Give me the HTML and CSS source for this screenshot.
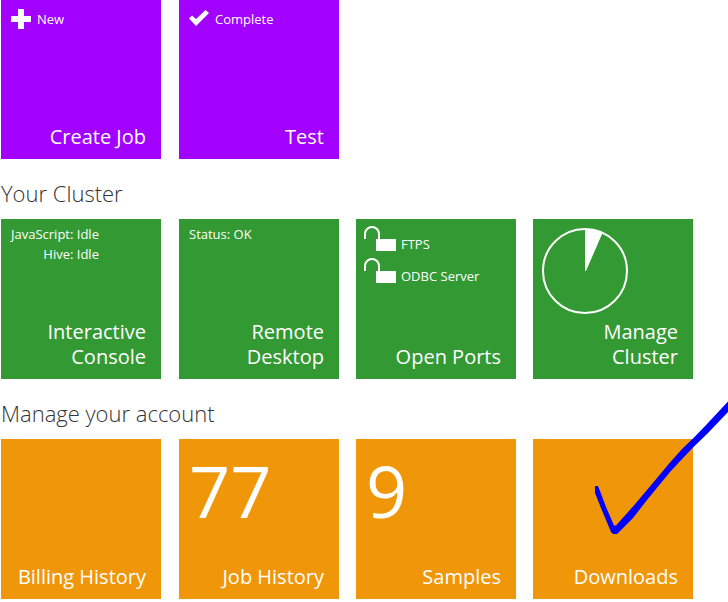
FILE: index.html
```html
<!DOCTYPE html>
<html lang="en">
<head>
<meta charset="utf-8">
<meta name="viewport" content="width=device-width, initial-scale=1">
<title>Cluster dashboard</title>
<link rel="stylesheet" href="styles.css">
</head>
<body>
<main class="page">
  <section class="tiles jobs">
    <a class="tile" href="#create">
      <span class="status">
        <svg class="icon" width="20" height="20" viewBox="0 0 20 20" aria-hidden="true"><path d="M7 0h6v7h7v6h-7v7H7v-7H0V7h7z"/></svg>
        New
      </span>
      <span class="label">Create Job</span>
    </a>
    <a class="tile" href="#test">
      <span class="status">
        <svg class="icon" width="20" height="20" viewBox="0 0 20 20" aria-hidden="true"><path d="M0 9.500 3 6.500l4 3.500L16.500 1 20 4 7 17z"/></svg>
        Complete
      </span>
      <span class="label">Test</span>
    </a>
  </section>

  <h2 class="heading">Your Cluster</h2>
  <section class="tiles cluster">
    <a class="tile" href="#console">
      <span class="states">
        <span>JavaScript: Idle</span>
        <span>Hive: Idle</span>
      </span>
      <span class="label">Interactive Console</span>
    </a>
    <a class="tile" href="#desktop">
      <span class="states"><span>Status: OK</span></span>
      <span class="label">Remote Desktop</span>
    </a>
    <a class="tile" href="#ports">
      <span class="ports">
        <span class="port">
          <svg class="icon" width="32" height="25" viewBox="0 0 32 25" aria-hidden="true"><path d="M0 13V8a8 8 0 0 1 16 0v5h-2V8A6 6 0 0 0 2 8v5zM12 13h20v12H12z"/></svg>
          <span class="port-name">FTPS</span>
        </span>
        <span class="port">
          <svg class="icon" width="32" height="25" viewBox="0 0 32 25" aria-hidden="true"><path d="M0 13V8a8 8 0 0 1 16 0v5h-2V8A6 6 0 0 0 2 8v5zM12 13h20v12H12z"/></svg>
          <span class="port-name">ODBC Server</span>
        </span>
      </span>
      <span class="label">Open Ports</span>
    </a>
    <a class="tile" href="#manage">
      <svg class="gauge" width="86" height="86" viewBox="0 0 86 86" aria-hidden="true">
        <circle cx="43" cy="43" r="42" fill="none" stroke="#fff" stroke-width="2"/>
        <path d="M43 43V1a42 42 0 0 1 17.500 4L44 43z" fill="#fff"/>
      </svg>
      <span class="label">Manage Cluster</span>
    </a>
  </section>

  <h2 class="heading">Manage your account</h2>
  <section class="tiles account">
    <a class="tile" href="#billing"><span class="label">Billing History</span></a>
    <a class="tile" href="#history">
      <span class="count">77</span>
      <span class="label">Job History</span>
    </a>
    <a class="tile" href="#samples">
      <span class="count">9</span>
      <span class="label">Samples</span>
    </a>
    <a class="tile" href="#downloads">
      <span class="label">Downloads</span>
      <svg class="mark" width="133" height="134" viewBox="0 0 133 134" aria-hidden="true">
        <path d="M0 86H3L5 91 11 107 19 125.500H21L38 106.500 52 90 75 62.500 88 48 98 38.500 112 24 133 1.500V12L113 33 98 47.500 88 58 75 72 52 100 38 118 25 131 22 134H18L16 132 6 108 0 93z" fill="#00f"/>
      </svg>
    </a>
  </section>
</main>
</body>
</html>
```
FILE: styles.css
```css
* {
  box-sizing: border-box;
}

body {
  margin: 0;
  background: #fff;
  color: #333;
  font-family: "Open Sans", "Noto Sans", sans-serif;
  overflow-x: hidden;
}

.page {
  margin-top: -1px;
  padding-left: 1px;
}

.tiles {
  display: grid;
  grid-template-columns: 161px repeat(3, 160px);
  column-gap: 17px;
}

.tile {
  position: relative;
  display: flex;
  flex-direction: column;
  align-items: flex-start;
  width: 160px;
  min-height: 160px;
  padding: 10px 15px 10px 10px;
  color: #fff;
  font-size: 13px;
  line-height: 20px;
  text-decoration: none;
}

.jobs .tile {
  background: #a200ff;
}

.cluster .tile {
  background: #339933;
}

.account .tile {
  background: #f09609;
}

.label {
  align-self: flex-end;
  margin-top: auto;
  max-width: 134px;
  font-size: 20px;
  line-height: 25px;
  text-align: right;
}

.heading {
  margin: 0;
  font-size: 22px;
  font-weight: 300;
  line-height: 30px;
  padding: 19px 0 11px;
}

.status {
  display: flex;
  gap: 6px;
}

.icon {
  display: block;
  flex: none;
  fill: currentColor;
}

.states {
  display: flex;
  flex-direction: column;
  align-items: flex-end;
  margin-top: -5px;
}

.ports {
  display: grid;
  gap: 7px;
  margin: -3px 0 0 -2px;
}

.port {
  display: flex;
  align-items: flex-end;
  gap: 5px;
}

.port-name {
  line-height: 14px;
}

.gauge {
  display: block;
  margin-left: -1px;
  margin-top: -1px;
}

.count {
  font-size: 72px;
  line-height: 82px;
}

.mark {
  position: absolute;
  left: 62px;
  bottom: 65px;
}
```
